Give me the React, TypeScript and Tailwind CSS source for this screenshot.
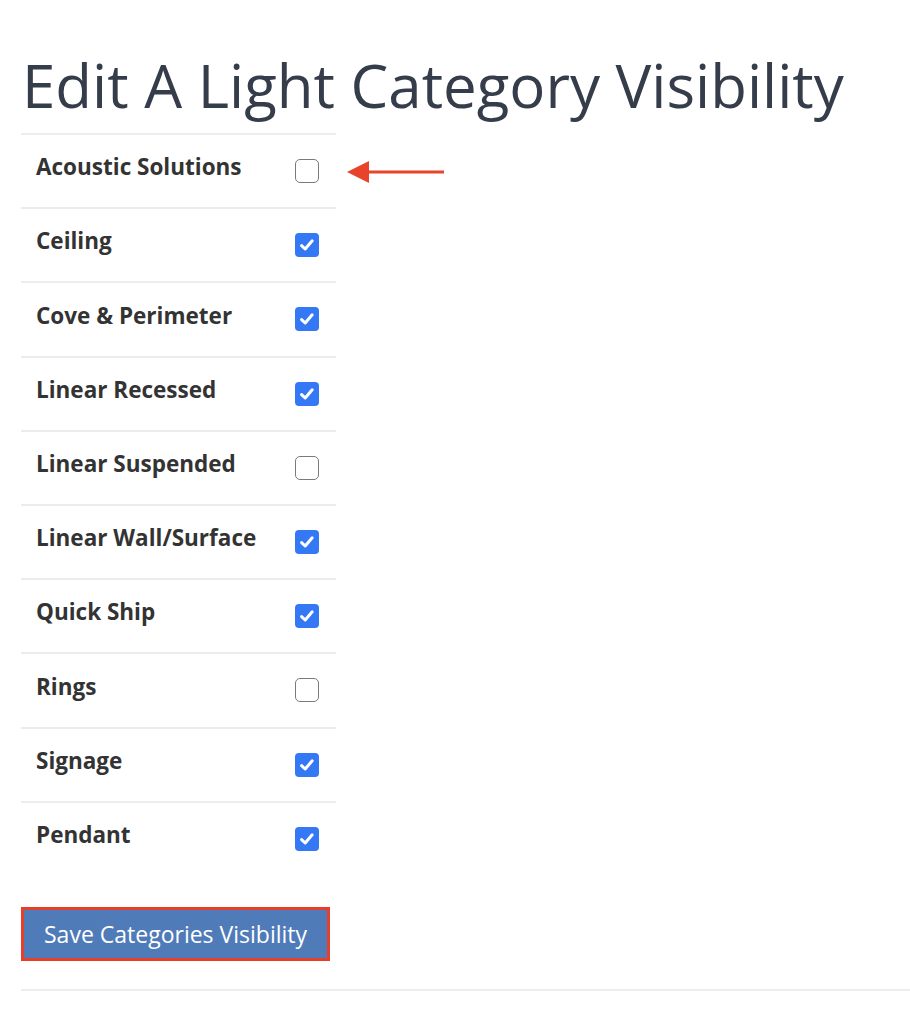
const categories = [
  { name: "Acoustic Solutions", visible: false },
  { name: "Ceiling", visible: true },
  { name: "Cove & Perimeter", visible: true },
  { name: "Linear Recessed", visible: true },
  { name: "Linear Suspended", visible: false },
  { name: "Linear Wall/Surface", visible: true },
  { name: "Quick Ship", visible: true },
  { name: "Rings", visible: false },
  { name: "Signage", visible: true },
  { name: "Pendant", visible: true },
];

function Checkbox({ checked }: { checked: boolean }) {
  if (checked) {
    return (
      <span className="flex h-[24px] w-[24px] items-center justify-center rounded-[4px] bg-[#3478f6]">
        <svg width="18" height="18" viewBox="0 0 18 18" fill="none">
          <path d="M3.6 9.6 7.2 13 14.2 4.8" stroke="white" strokeWidth="3" strokeLinecap="round" strokeLinejoin="round" />
        </svg>
      </span>
    );
  }
  return <span className="block h-[24px] w-[24px] rounded-[5px] border-[1.5px] border-[#7a7a7a] bg-white" />;
}

export default function App() {
  return (
    <div className="min-h-[1024px] bg-white pl-[21px] pt-[45px] font-['Open_Sans',sans-serif]">
      <h1 className="ml-px text-[60px] leading-[80px] font-normal text-[#353c4a]">
        Edit A Light Category Visibility
      </h1>

      <div className="mt-[8px] w-[315px]">
        {categories.map((c, i) => (
          <div
            key={c.name}
            className="flex h-[74.2px] items-center justify-between border-t-2 border-[#ececec] pl-[15px] pr-[17px]"
          >
            <span className="-mt-[8px] text-[22.5px] font-bold text-[#333]">{c.name}</span>
            <div className="relative">
              <Checkbox checked={c.visible} />
              {i === 0 && (
                <svg className="absolute left-[51px] top-[1px]" width="100" height="24" viewBox="0 0 100 24">
                  <polygon points="1,12 23,1 23,23" fill="#e8432b" />
                  <rect x="20" y="10.5" width="78" height="3" fill="#e8432b" />
                </svg>
              )}
            </div>
          </div>
        ))}
      </div>

      <div className="mt-[32px] inline-block border-[3px] border-[#e4402b]">
        <button className="h-[48px] bg-[#4f7bb9] px-[20px] text-[23px] text-white font-['Open_Sans',sans-serif]">
          Save Categories Visibility
        </button>
      </div>

      <div className="mt-[28px] border-t-2 border-[#ececec]" />
    </div>
  );
}
